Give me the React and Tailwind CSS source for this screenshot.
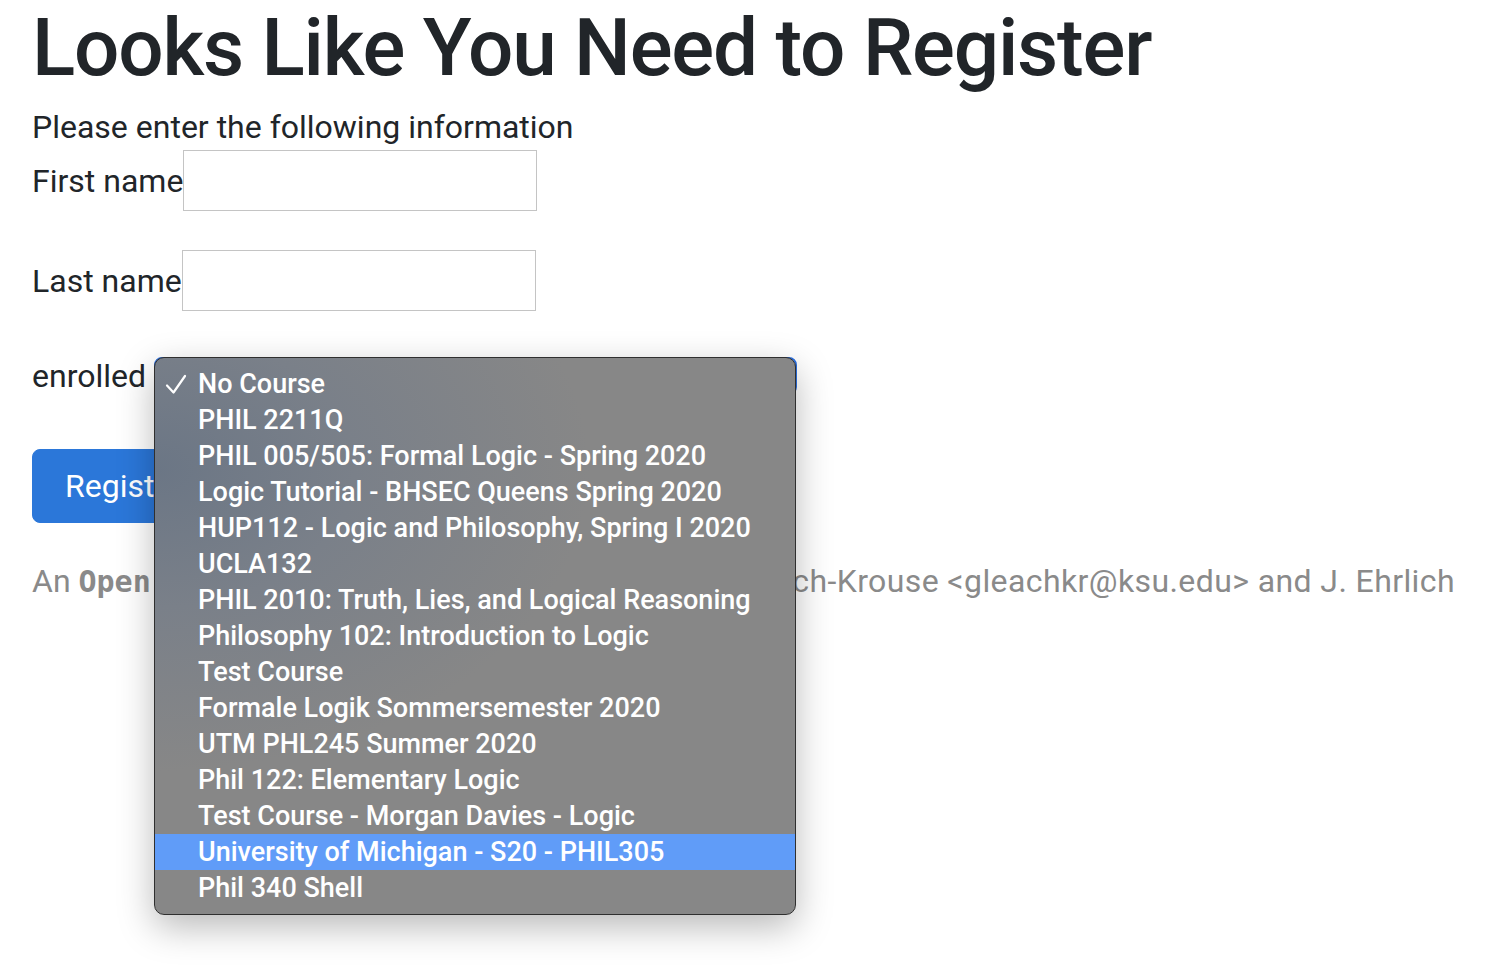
import React from 'react';

const courses = [
  'No Course',
  'PHIL 2211Q',
  'PHIL 005/505: Formal Logic - Spring 2020',
  'Logic Tutorial - BHSEC Queens Spring 2020',
  'HUP112 - Logic and Philosophy, Spring I 2020',
  'UCLA132',
  'PHIL 2010: Truth, Lies, and Logical Reasoning',
  'Philosophy 102: Introduction to Logic',
  'Test Course',
  'Formale Logik Sommersemester 2020',
  'UTM PHL245 Summer 2020',
  'Phil 122: Elementary Logic',
  'Test Course - Morgan Davies - Logic',
  'University of Michigan - S20 - PHIL305',
  'Phil 340 Shell',
];

const Check = () => (
  <svg width="22" height="22" viewBox="0 0 22 22" className="ml-[10px]">
    <path d="M2 12.5 L8.5 19.5 L20 3" fill="none" stroke="white" strokeWidth="2.2" strokeLinecap="round" strokeLinejoin="round" />
  </svg>
);

const CourseMenu = () => (
  <div className="absolute left-0 top-0 z-10 w-[642px] rounded-[10px] border border-[#2f2f2f] bg-[radial-gradient(ellipse_at_0%_20%,#6b7685_0%,#7a8089_22%,#878787_48%)] py-2 shadow-[0_12px_36px_rgba(0,0,0,0.28)]">
    {courses.map((c, i) => (
      <div
        key={c}
        className={`flex h-9 items-center text-[27px] font-medium text-white ${i === 13 ? 'bg-[#609cf8]' : ''}`}
      >
        <span className="flex w-[43px] items-center">{i === 0 && <Check />}</span>
        <span>{c}</span>
      </div>
    ))}
  </div>
);

export default function App() {
  return (
    <div className="min-h-screen bg-white px-8 font-['Roboto',sans-serif] text-[#212529]">
      <h1 className="mb-[9px] text-[80px] font-medium leading-[96px] tracking-[-1.2px]">Looks Like You Need to Register</h1>
      <p className="text-[32px] leading-[45px]">Please enter the following information</p>

      <div className="flex items-center">
        <label className="text-[32px] leading-[48px]">First name</label>
        <input className="h-[61px] w-[354px] border border-[#c4c4c4] outline-none" />
      </div>

      <div className="mt-[39px] flex items-center">
        <label className="text-[32px] leading-[48px]">Last name</label>
        <input className="h-[61px] w-[354px] border border-[#c4c4c4] outline-none" />
      </div>

      <div className="mt-[41px] flex items-center">
        <label className="mr-2 text-[32px] leading-[48px]">enrolled</label>
        <div className="relative">
          <div className="h-[38px] w-[643px] rounded-[8px] border-2 border-[#2a6fe0] bg-white" />
          <CourseMenu />
        </div>
      </div>

      <button className="mt-[49px] rounded-[8px] border border-[#2b77d9] bg-[#2b77d9] px-8 py-3 text-[32px] leading-[48px] text-white">
        Register
      </button>

      <p className="mt-[34px] whitespace-nowrap text-[32px] leading-[48px] text-[#8a8a8a]">
        An <span className="font-['DejaVu_Sans_Mono',monospace] text-[30px] font-bold">Open Tower</span>
        <span className="tracking-[16px]"> project by G. Lea</span>
        <span className="tracking-[0.4px]">ch-Krouse &lt;gleachkr@ksu.edu&gt; and J. Ehrlich</span>
      </p>
    </div>
  );
}
